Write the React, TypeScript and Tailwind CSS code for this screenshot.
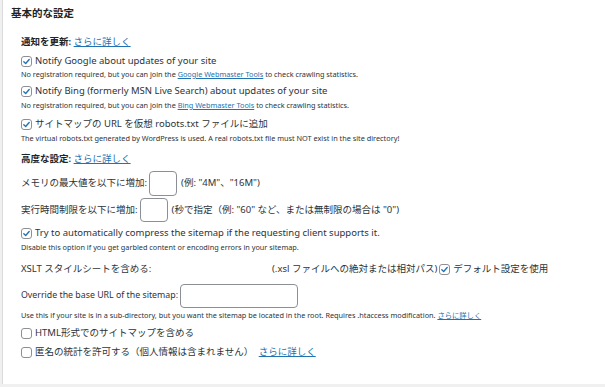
import React from "react";

const font = { fontFamily: '"Noto Sans", "Noto Sans CJK JP", sans-serif' };

function Check({ checked }: { checked: boolean }) {
  return (
    <span className="inline-flex h-[11px] w-[11px] shrink-0 items-center justify-center rounded-[3px] border border-[#8c8f94] bg-white">
      {checked && (
        <svg width="9" height="9" viewBox="0 0 20 20">
          <path d="M4 10.5 L8.2 14.5 L16 5.5" fill="none" stroke="#2271b1" strokeWidth="3" strokeLinecap="round" strokeLinejoin="round" />
        </svg>
      )}
    </span>
  );
}

function Link({ children }: { children: React.ReactNode }) {
  return <a className="text-[#2271b1] underline">{children}</a>;
}

export default function App() {
  return (
    <div className="h-[387px] w-[605px] bg-[#f0f0f1] text-[#2c3338]" style={font}>
      <div className="ml-[2px] flex h-[384px] flex-col border-l border-[#dcdcde] bg-white pl-[8px]">
        <div className="flex h-[28px] items-center text-[10.5px] font-bold text-[#1d2327]">基本的な設定</div>
        <div className="flex flex-col pl-[10px]">
          <div className="mt-[6px] flex h-[16px] items-center text-[9.5px] font-semibold text-[#1d2327]">
            通知を更新:&nbsp;<span className="font-normal"><Link>さらに詳しく</Link></span>
          </div>
          <div className="mt-[4px] flex h-[15px] items-center gap-[3px] text-[9.5px]">
            <Check checked /> Notify Google about updates of your site
          </div>
          <div className="flex h-[10px] items-center text-[7.3px]">
            <span>No registration required, but you can join the <Link>Google Webmaster Tools</Link> to check crawling statistics.</span>
          </div>
          <div className="mt-[4px] flex h-[16px] items-center gap-[3px] text-[9.5px]">
            <Check checked /> Notify Bing (formerly MSN Live Search) about updates of your site
          </div>
          <div className="flex h-[12px] items-center text-[7.3px]">
            <span>No registration required, but you can join the <Link>Bing Webmaster Tools</Link> to check crawling statistics.</span>
          </div>
          <div className="mt-[5px] flex h-[16px] items-center gap-[3px] text-[9.5px]">
            <Check checked /> サイトマップの URL を仮想 robots.txt ファイルに追加
          </div>
          <div className="flex h-[12px] items-center text-[7.3px]">
            The virtual robots.txt generated by WordPress is used. A real robots.txt file must NOT exist in the site directory!
          </div>
          <div className="mt-[7px] flex h-[16px] items-center text-[9.5px] font-semibold text-[#1d2327]">
            高度な設定:&nbsp;<span className="font-normal"><Link>さらに詳しく</Link></span>
          </div>
          <div className="mt-[3px] flex h-[26px] items-center gap-[2px] text-[9.5px]">
            <span>メモリの最大値を以下に増加:</span>
            <span className="h-[25px] w-[28px] rounded-[4px] border border-[#8c8f94]" />
            <span className="ml-[2px]">(例: "4M"、"16M")</span>
          </div>
          <div className="mt-[1px] flex h-[26px] items-center gap-[2px] text-[9.5px]">
            <span>実行時間制限を以下に増加:</span>
            <span className="h-[24px] w-[28px] rounded-[4px] border border-[#8c8f94]" />
            <span className="ml-[2px]">(秒で指定（例: "60" など、または無制限の場合は "0")</span>
          </div>
          <div className="mt-[2px] flex h-[16px] items-center gap-[3px] text-[9.5px]">
            <Check checked /> Try to automatically compress the sitemap if the requesting client supports it.
          </div>
          <div className="flex h-[12px] items-center text-[7.3px]">
            Disable this option if you get garbled content or encoding errors in your sitemap.
          </div>
          <div className="mt-[8px] flex h-[16px] items-center text-[9.5px]">
            <span className="w-[251px] shrink-0">XSLT スタイルシートを含める:</span>
            <span>(.xsl ファイルへの絶対または相対パス)</span>
            <span className="ml-[2px] flex items-center gap-[3px]"><Check checked />デフォルト設定を使用</span>
          </div>
          <div className="mt-[7px] flex h-[24px] items-center gap-[2px] text-[8.8px]">
            <span>Override the base URL of the sitemap:</span>
            <span className="h-[24px] w-[118px] rounded-[4px] border border-[#8c8f94]" />
          </div>
          <div className="flex h-[14px] items-center text-[7.3px]">
            <span>Use this if your site is in a sub-directory, but you want the sitemap be located in the root. Requires .htaccess modification. <Link>さらに詳しく</Link></span>
          </div>
          <div className="mt-[3px] flex h-[16px] items-center gap-[3px] text-[9.5px]">
            <Check checked={false} /> HTML形式でのサイトマップを含める
          </div>
          <div className="mt-[3px] flex h-[16px] items-center gap-[3px] text-[9.5px]">
            <Check checked={false} /> 匿名の統計を許可する（個人情報は含まれません）&nbsp;<Link>さらに詳しく</Link>
          </div>
        </div>
      </div>
    </div>
  );
}
